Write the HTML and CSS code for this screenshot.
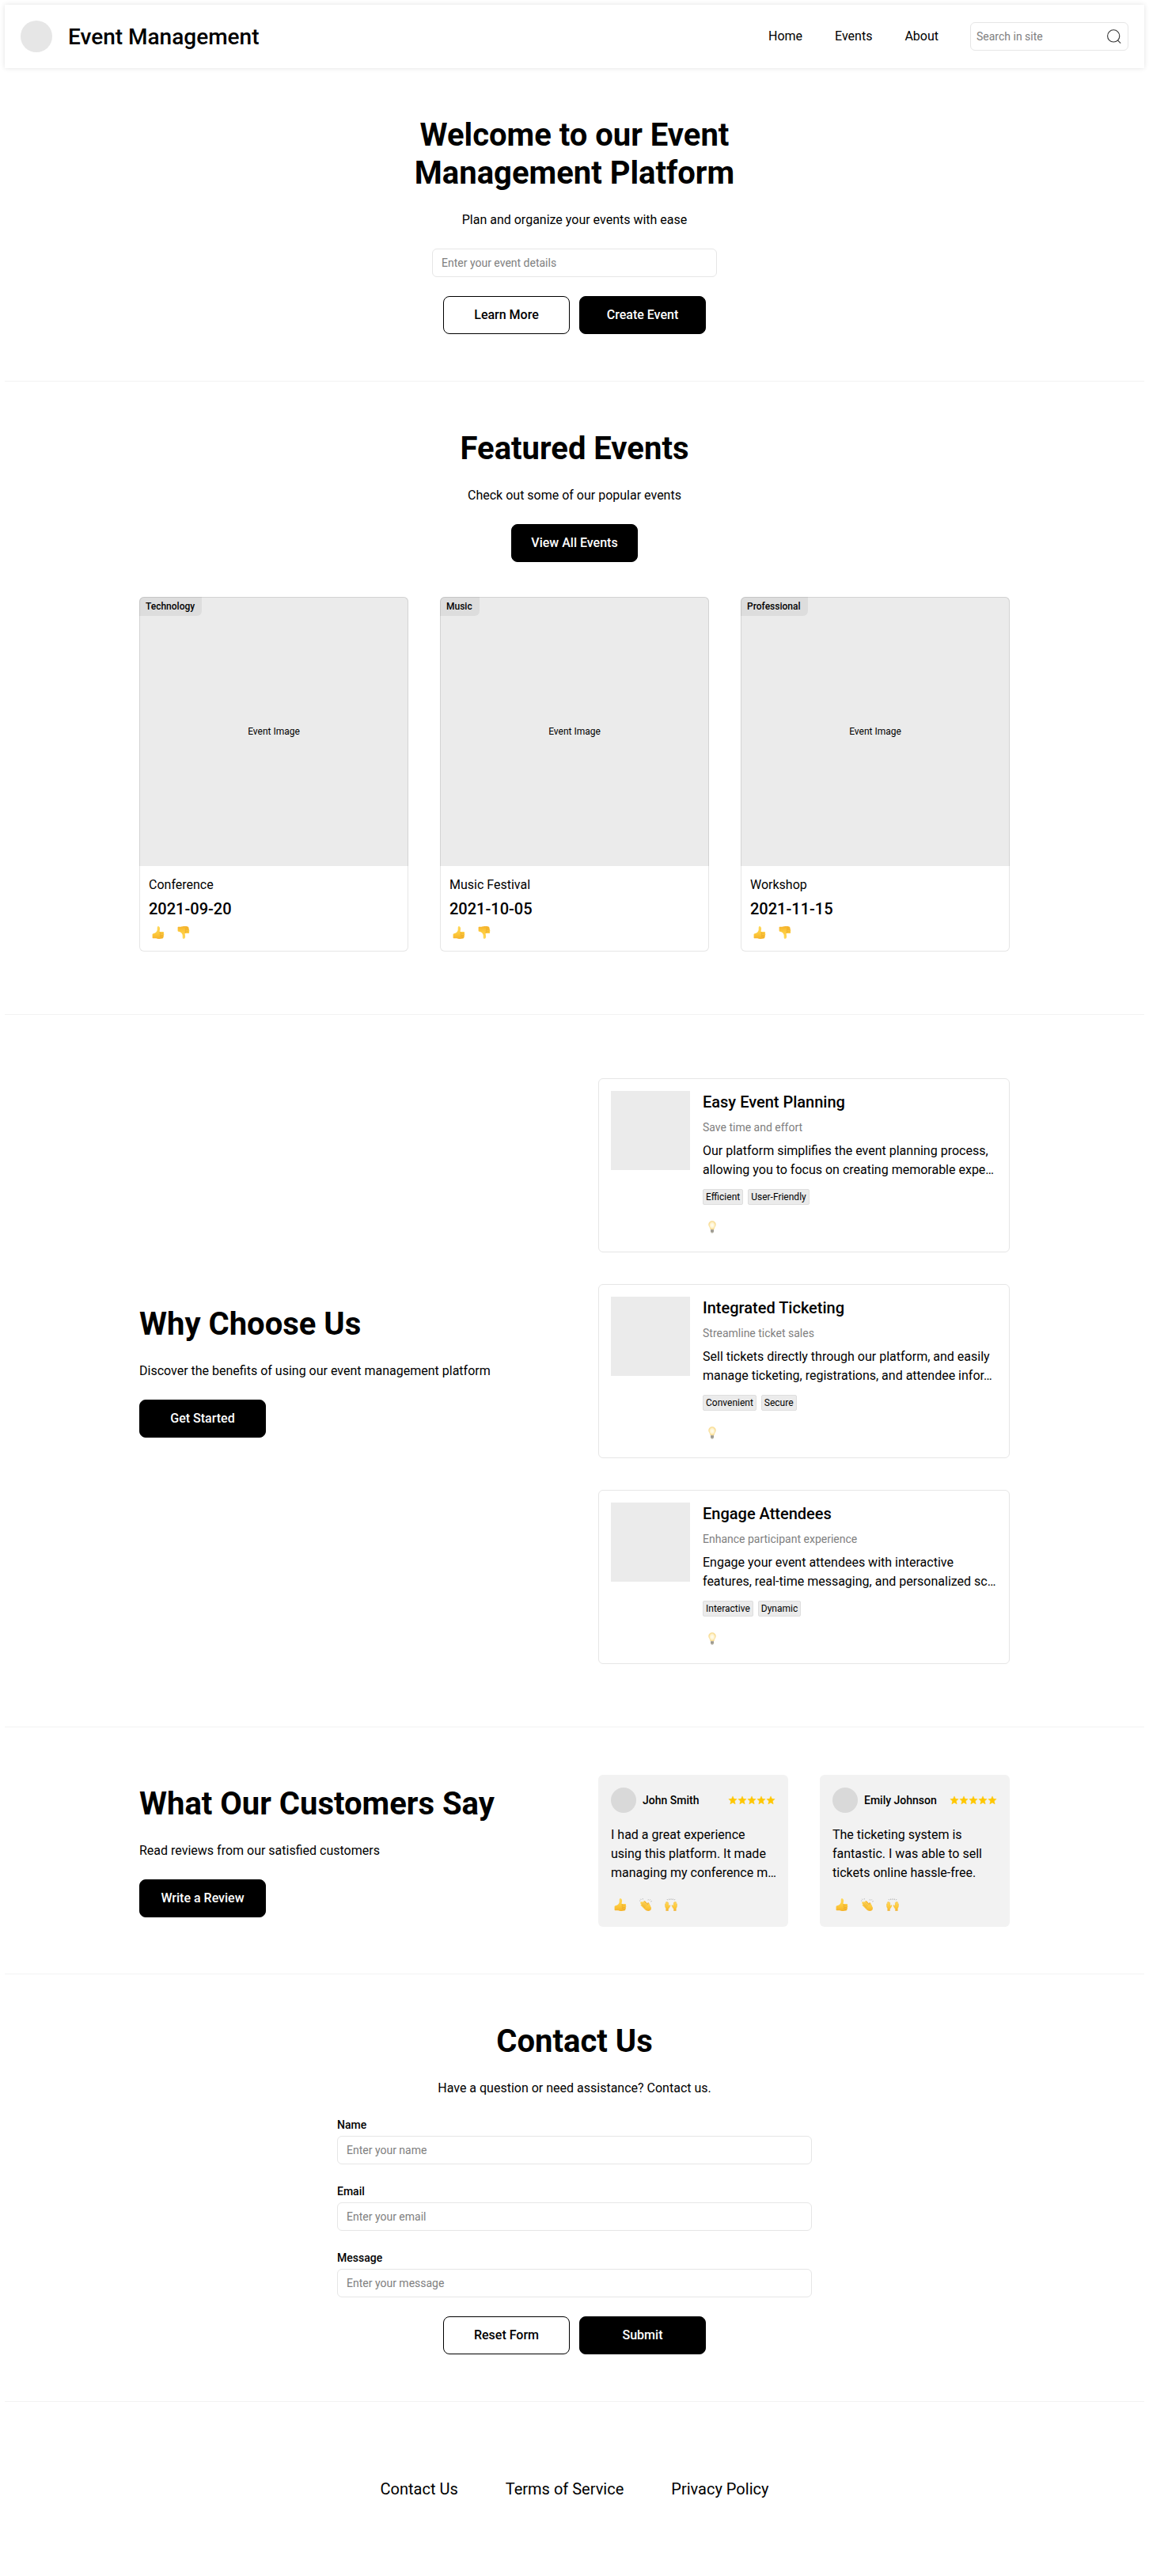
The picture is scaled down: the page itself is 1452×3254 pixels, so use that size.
FILE: index.html
```html
<!DOCTYPE html>
<html lang="en">
<head>
<meta charset="utf-8">
<title>Event Management</title>
<link rel="stylesheet" href="styles.css">
</head>
<body>
<svg class="defs" aria-hidden="true">
  <defs>
    <linearGradient id="skin" x1="0" y1="0" x2="0" y2="1"><stop offset="0" stop-color="#ffd95c"/><stop offset=".6" stop-color="#fdc93c"/><stop offset="1" stop-color="#f5b32c"/></linearGradient>
    <radialGradient id="glow"><stop offset="0" stop-color="#fffef5"/><stop offset=".6" stop-color="#fff3cd"/><stop offset="1" stop-color="#f7d888"/></radialGradient>
    <symbol id="up" viewBox="0 0 16 16">
      <path fill="url(#skin)" d="M.6 10.600c0-.9.400-1.300 1.200-1.400 2.300-.2 3.900-1.700 4.600-3.400.6-1.500.1-3 .4-4.500C7 .4 7.600-.1 8.500.2c1.500.5 1.800 2.300 1.500 3.900-.2 1.100-.4 1.900-.3 2.800h3.900c1.800 0 2 1.900 1 2.300 1 .4 1 2-.1 2.300.8.5.7 1.900-.3 2.100.5.8.1 1.800-1 2-1.700.4-4.600.5-6.500.1-1.200-.2-1.700-.5-2.700-.5H1.600c-.7 0-1-.4-1-1z"/>
      <path fill="none" stroke="#e09a22" stroke-width=".5" d="M10.600 7c-.8.6-.8 1.900.1 2.200h3.700M10.800 9.300c-.8.500-.7 1.900.1 2.200h3.400M10.900 11.600c-.7.500-.6 1.800.2 2h2.900"/>
    </symbol>
    <symbol id="down" viewBox="0 0 16 16"><use href="#up" width="16" height="16" transform="matrix(1 0 0 -1 0 16)"/></symbol>
    <symbol id="bulb" viewBox="0 0 16 16">
      <path fill="url(#glow)" stroke="#f5d78a" stroke-width=".5" d="M8 .4c-2.600 0-4.400 1.900-4.400 4.300 0 2.500 2 3.600 2.300 6.300h4.200c.3-2.700 2.300-3.800 2.300-6.300C12.400 2.300 10.600.4 8 .4z"/>
      <path fill="#b8b4a8" d="M6 11h4v3l-.8 1.200c-.5.6-1.900.6-2.400 0L6 14z"/>
      <path stroke="#77756e" stroke-width=".5" d="M6 12.300h4M6.200 13.700h3.600"/>
    </symbol>
    <symbol id="clap" viewBox="0 0 16 16">
      <path fill="#f2ae2c" d="M5.500 3.700c.8-.8 1.700-.4 2.300.4l2.300 2.600c.1-1.500 1.700-1.900 2.100-.5l2.400 5.300-4 3.700-5-5z"/>
      <path fill="url(#skin)" d="M2.200 4.400c.5-.5 1.100-.3 1.600.2l.7.5c-.4-.9.7-1.700 1.400-1l4.900 4.700c-.3-1.100-.1-2.300.8-2.400.9-.1 1.300 1.200 1.700 2.400l1.400 2.700c1 2.400-.8 4.400-3.200 4.400-1.900 0-3.400-.8-4.600-2L1.900 9.100c-.8-.9.2-1.700.8-1.300L1.200 6.300c-.7-.8.2-1.600 1-1.200-.3-.2-.3-.5 0-.7z"/>
      <path fill="none" stroke="#d8942a" stroke-width=".45" d="M4.300 5l4.600 4.500M2.500 5.700l5.200 5.100M2.900 7.900l4 4"/>
      <path stroke="#888" stroke-width=".65" d="M.3 3l1 .4M1.500.8l.7.900M4.200.2l.2 1.100M11.300 1.300l-.3 1M13.700 1.500l-.8.9M15.600 3.600l-1.200.4"/>
    </symbol>
    <symbol id="hands" viewBox="0 0 16 16">
      <path id="palm" fill="url(#skin)" stroke="#e6a52b" stroke-width=".2" d="M1.600 15.700v-3C.7 11.500.1 9.300.3 7.400c.1-.9.7-.9 1-.2V5.200c.1-.8 1-.8 1.100 0v-.6c.2-.8 1.100-.7 1.200.1v.8c.2-.7 1.100-.6 1.200.2l.3 4.100c.6-.9 1.200-1.500 1.800-1.200.6.3.2 1-.2 1.600-.7 1.200-1.200 2.400-2.100 3.100v2.400z"/>
      <use href="#palm" transform="matrix(-1 0 0 1 16 0)"/>
      <path stroke="#777" stroke-width=".7" d="M3.200 1.300l.4.900M5.600.7l.2 1.100M8 .5v1.100M10.400.7l-.2 1.100M12.800 1.300l-.4.900"/>
    </symbol>
    <symbol id="stars" viewBox="0 0 60 12">
      <g fill="#ffc700" stroke="#ffc700" stroke-width=".4" stroke-linejoin="round">
        <path id="star" d="M6 .9l1.500 3.300 3.700.4-2.800 2.500.8 3.800L6 9l-3.200 1.900.8-3.800L.8 4.600l3.700-.4z"/>
        <use href="#star" x="12"/><use href="#star" x="24"/><use href="#star" x="36"/><use href="#star" x="48"/>
      </g>
    </symbol>
  </defs>
</svg>

<div class="page">
  <header class="header">
    <span class="logo"></span>
    <span class="brand">Event Management</span>
    <nav class="nav"><a>Home</a><a>Events</a><a>About</a></nav>
    <div class="search">
      <span>Search in site</span>
      <svg width="20" height="20" viewBox="0 0 20 20" fill="none" stroke="#333" stroke-width="1.100"><circle cx="9.200" cy="9.400" r="7.600"/><path d="M14.400 14.800l3.800 3.800"/></svg>
    </div>
  </header>

  <section class="section centered">
    <h1 class="title hero-title">Welcome to our Event Management Platform</h1>
    <p class="lead">Plan and organize your events with ease</p>
    <div class="input hero-input">Enter your event details</div>
    <div class="actions"><a class="btn outline">Learn More</a><a class="btn">Create Event</a></div>
  </section>

  <section class="section centered featured">
    <h2 class="title">Featured Events</h2>
    <p class="lead">Check out some of our popular events</p>
    <a class="btn">View All Events</a>
    <div class="events">
      <article class="event">
        <div class="event-image">Event Image<span class="badge">Technology</span></div>
        <div class="event-body"><p>Conference</p><p class="date">2021-09-20</p>
          <div class="reactions"><svg><use href="#up"/></svg><svg><use href="#down"/></svg></div></div>
      </article>
      <article class="event">
        <div class="event-image">Event Image<span class="badge">Music</span></div>
        <div class="event-body"><p>Music Festival</p><p class="date">2021-10-05</p>
          <div class="reactions"><svg><use href="#up"/></svg><svg><use href="#down"/></svg></div></div>
      </article>
      <article class="event">
        <div class="event-image">Event Image<span class="badge">Professional</span></div>
        <div class="event-body"><p>Workshop</p><p class="date">2021-11-15</p>
          <div class="reactions"><svg><use href="#up"/></svg><svg><use href="#down"/></svg></div></div>
      </article>
    </div>
  </section>

  <section class="section split why">
    <div class="intro">
      <h2 class="title">Why Choose Us</h2>
      <p class="lead">Discover the benefits of using our event management platform</p>
      <a class="btn">Get Started</a>
    </div>
    <div class="features">
      <article class="feature">
        <div class="thumb"></div>
        <div class="feature-body">
          <h3>Easy Event Planning</h3><p class="sub">Save time and effort</p>
          <p class="desc">Our platform simplifies the event planning process,<br>allowing you to focus on creating memorable expe…</p>
          <div class="tags"><span>Efficient</span><span>User-Friendly</span></div>
          <div class="reactions"><svg><use href="#bulb"/></svg></div>
        </div>
      </article>
      <article class="feature">
        <div class="thumb"></div>
        <div class="feature-body">
          <h3>Integrated Ticketing</h3><p class="sub">Streamline ticket sales</p>
          <p class="desc">Sell tickets directly through our platform, and easily<br>manage ticketing, registrations, and attendee infor…</p>
          <div class="tags"><span>Convenient</span><span>Secure</span></div>
          <div class="reactions"><svg><use href="#bulb"/></svg></div>
        </div>
      </article>
      <article class="feature">
        <div class="thumb"></div>
        <div class="feature-body">
          <h3>Engage Attendees</h3><p class="sub">Enhance participant experience</p>
          <p class="desc">Engage your event attendees with interactive<br>features, real-time messaging, and personalized sc…</p>
          <div class="tags"><span>Interactive</span><span>Dynamic</span></div>
          <div class="reactions"><svg><use href="#bulb"/></svg></div>
        </div>
      </article>
    </div>
  </section>

  <section class="section split">
    <div class="intro">
      <h2 class="title">What Our Customers Say</h2>
      <p class="lead">Read reviews from our satisfied customers</p>
      <a class="btn">Write a Review</a>
    </div>
    <div class="reviews">
      <article class="review">
        <div class="author"><span class="avatar"></span><b>John Smith</b><svg class="stars"><use href="#stars"/></svg></div>
        <p>I had a great experience<br>using this platform. It made<br>managing my conference m…</p>
        <div class="reactions"><svg><use href="#up"/></svg><svg><use href="#clap"/></svg><svg><use href="#hands"/></svg></div>
      </article>
      <article class="review">
        <div class="author"><span class="avatar"></span><b>Emily Johnson</b><svg class="stars"><use href="#stars"/></svg></div>
        <p>The ticketing system is<br>fantastic. I was able to sell<br>tickets online hassle-free.</p>
        <div class="reactions"><svg><use href="#up"/></svg><svg><use href="#clap"/></svg><svg><use href="#hands"/></svg></div>
      </article>
    </div>
  </section>

  <section class="section centered">
    <h2 class="title">Contact Us</h2>
    <p class="lead">Have a question or need assistance? Contact us.</p>
    <div class="form">
      <div class="field"><label>Name</label><div class="input">Enter your name</div></div>
      <div class="field"><label>Email</label><div class="input">Enter your email</div></div>
      <div class="field"><label>Message</label><div class="input">Enter your message</div></div>
    </div>
    <div class="actions"><a class="btn outline">Reset Form</a><a class="btn">Submit</a></div>
  </section>

  <footer class="footer"><a>Contact Us</a><a>Terms of Service</a><a>Privacy Policy</a></footer>
</div>
</body>
</html>
```
FILE: styles.css
```css
* { box-sizing: border-box; }
body { margin: 0; padding: 6px; background: #fff; color: #000; font: 400 16px/24px Roboto, sans-serif; }
h1, h2, h3, p { margin: 0; }
.defs { position: absolute; width: 0; height: 0; }
.page { width: 1440px; }

.header { height: 80px; padding: 0 20px; display: flex; align-items: center; box-shadow: 0 0 6px rgba(0, 0, 0, .12); }
.logo { width: 40px; height: 40px; border-radius: 50%; background: #e6e6e6; }
.brand { margin-left: 20px; padding-top: 1px; font-size: 28px; line-height: 36px; font-weight: 500; }
.nav { margin-left: auto; display: flex; gap: 41px; }
.search { width: 200px; height: 36px; margin-left: 40px; padding: 0 7px; display: flex; align-items: center; justify-content: space-between; border: 1px solid #e6e6e6; border-radius: 6px; color: #808080; font-size: 14px; }

.section { padding: 60px 170px; border-bottom: 1px solid #f2f2f2; }
.section:not(.featured):not(.why) { padding-bottom: 59px; }
.centered { display: flex; flex-direction: column; align-items: center; gap: 24px; }
.title { padding-top: 1px; margin-bottom: -1px; font-size: 40px; line-height: 48px; font-weight: 700; }
.hero-title { width: 480px; text-align: center; }
.input { height: 36px; width: 100%; padding: 0 11px; display: flex; align-items: center; border: 1px solid #e6e6e6; border-radius: 6px; color: #808080; font-size: 14px; }
.hero-input { width: 360px; }
.actions { display: flex; gap: 12px; }
.btn { width: 160px; height: 48px; display: flex; align-items: center; justify-content: center; border: 1px solid #000; border-radius: 8px; background: #000; color: #fff; font-weight: 500; }
.btn.outline { background: #fff; color: #000; }

.featured { padding-bottom: 79px; }
.events { margin-top: 20px; display: flex; gap: 40px; }
.event { width: 340px; height: 448px; display: flex; flex-direction: column; border-radius: 6px; box-shadow: inset 0 0 0 1px #e6e6e6; }
.event-image { position: relative; height: 340px; padding-bottom: 2px; display: flex; align-items: center; justify-content: center; border: 1px solid #d3d3d3; border-bottom: 0; border-radius: 6px 6px 0 0; background: #ebebeb; font-size: 12px; }
.badge { position: absolute; top: -1px; left: -1px; height: 24px; padding: 0 9px 0 8px; line-height: 24px; border-radius: 6px 0 6px 0; background: rgba(0, 0, 0, .06); font-weight: 500; }
.event-body { padding: 12px; display: flex; flex-direction: column; gap: 4px; }
.date { font-size: 20px; line-height: 28px; font-weight: 500; }
.reactions { height: 24px; padding: 4px; display: flex; gap: 16px; }
.reactions svg { width: 16px; height: 16px; }

.split { display: flex; align-items: center; justify-content: space-between; }
.intro { display: flex; flex-direction: column; gap: 24px; }
.why { padding-top: 80px; padding-bottom: 79px; }
.features { display: flex; flex-direction: column; gap: 40px; }
.feature { width: 520px; height: 220px; padding: 15px; display: flex; gap: 16px; border: 1px solid #e6e6e6; border-radius: 6px; }
.thumb { width: 100px; height: 100px; background: #ebebeb; }
.feature-body { white-space: nowrap; }
h3 { font-size: 20px; line-height: 28px; font-weight: 500; }
.sub { margin: 8px 0; font-size: 14px; line-height: 20px; color: #808080; }
.tags { margin: 12px 0 16px; display: flex; gap: 6px; }
.tags span { height: 20px; padding: 0 3px; line-height: 18px; font-size: 12px; border: 1px solid #dedede; border-radius: 2px; background: #ebebeb; }

.reviews { display: flex; gap: 40px; }
.review { width: 240px; height: 192px; padding: 16px; border-radius: 6px; background: #f2f2f2; white-space: nowrap; }
.author { display: flex; align-items: center; font-size: 14px; }
.author b { margin-left: 8px; font-weight: 500; }
.avatar { width: 32px; height: 32px; border-radius: 50%; background: #d9d9d9; }
.stars { width: 60px; height: 12px; margin-left: auto; }
.review p { margin: 16px 0; }

.form { width: 600px; display: flex; flex-direction: column; gap: 24px; }
.field { display: flex; flex-direction: column; gap: 4px; }
.field label { font-size: 14px; line-height: 20px; font-weight: 500; }
.footer { height: 214px; padding-top: 5px; display: flex; align-items: center; justify-content: center; gap: 60px; font-size: 20px; line-height: 28px; }
```
